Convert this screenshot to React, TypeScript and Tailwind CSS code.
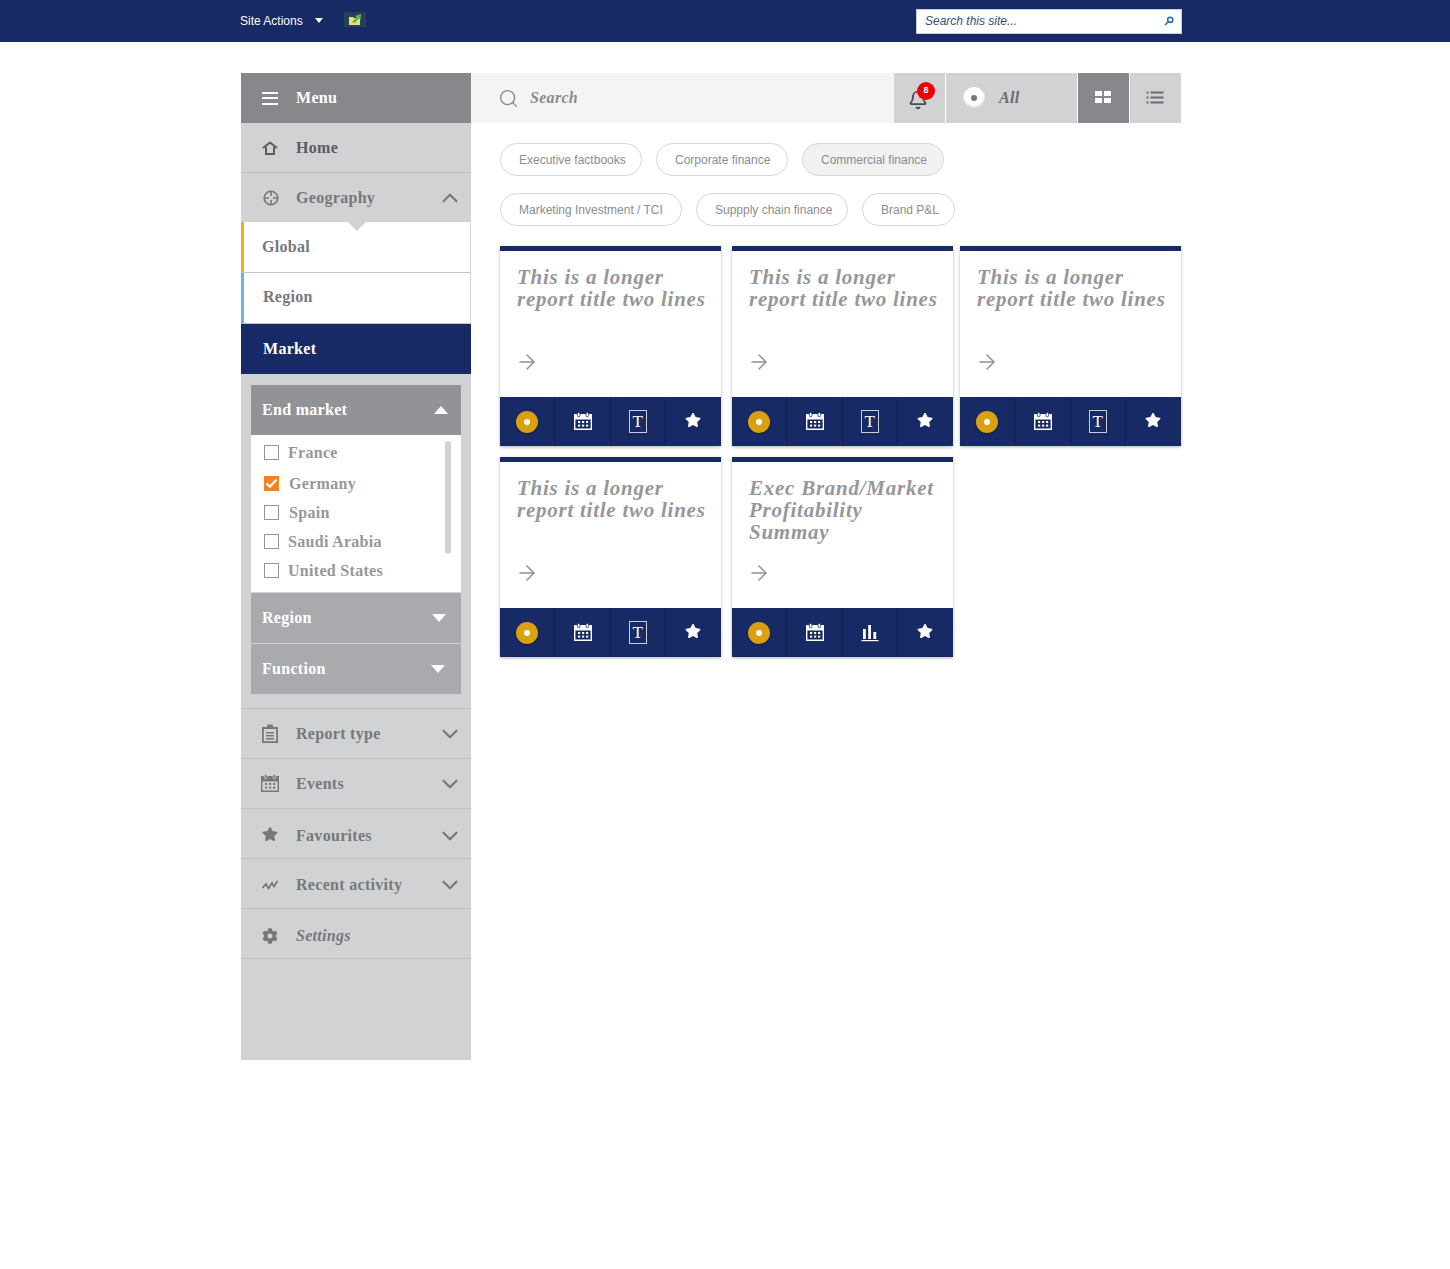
import { ArrowRight, Bell, ChevronDown, ChevronUp, Search } from "lucide-react";
import { FaCog, FaStar } from "react-icons/fa";
import type { ReactNode } from "react";

const serif = "font-['Liberation_Serif',serif] font-bold tracking-[0.3px]";

const NAVY = "bg-[#172a65]";

function Calendar({ className, cut }: { className?: string; cut: string }) {
  return (
    <svg viewBox="0 0 18 18" className={className} fill="currentColor">
      <path fillRule="evenodd" d="M0 2h18v16H0V2zm1.4 5.4v9.2h15.2V7.4H1.4z" />
      <rect x="3.4" y="0.4" width="2.6" height="4.4" rx="1.3" stroke={cut} strokeWidth="0.8" />
      <rect x="12" y="0.4" width="2.6" height="4.4" rx="1.3" stroke={cut} strokeWidth="0.8" />
      <rect x="4" y="9" width="2.2" height="2" />
      <rect x="8" y="9" width="2.2" height="2" />
      <rect x="12" y="9" width="2.2" height="2" />
      <rect x="4" y="12.6" width="2.2" height="2" />
      <rect x="8" y="12.6" width="2.2" height="2" />
      <rect x="12" y="12.6" width="2.2" height="2" />
    </svg>
  );
}

function TBox() {
  return (
    <div className="flex h-[23px] w-[18px] items-center justify-center border-[1.5px] border-[#c8cbd8] font-['Liberation_Serif',serif] text-[17px] leading-none text-white">
      T
    </div>
  );
}

function Bars() {
  return (
    <svg viewBox="0 0 18 18" className="h-[18px] w-[18px]" fill="white">
      <rect x="2" y="5" width="2.8" height="10" />
      <rect x="7.2" y="1" width="2.8" height="14" />
      <rect x="12.4" y="8" width="2.8" height="7" />
      <rect x="0.5" y="16" width="17" height="1.2" />
    </svg>
  );
}

function Card({ title, bars, className = "" }: { title: ReactNode; bars?: boolean; className?: string }) {
  const cell = "flex w-1/4 items-center justify-center border-r border-[#101f4e] last:border-r-0";
  return (
    <div className={`flex h-[200px] w-[221px] flex-col border-t-[5px] border-[#172a65] bg-white shadow-[0_1px_3px_rgba(0,0,0,0.3)] ${className}`}>
      <div className="h-[146px] pt-[15px] pl-[17px]">
        <div className="h-[84px] font-['Liberation_Serif',serif] text-[21px] leading-[22px] font-bold tracking-[0.75px] whitespace-nowrap text-[#96979a] italic">
          {title}
        </div>
        <ArrowRight className="ml-[-2px] h-[24px] w-[24px] text-[#909194]" strokeWidth={1.5} />
      </div>
      <div className={`flex h-[49px] ${NAVY}`}>
        <div className={cell}>
          <div className="flex h-[22px] w-[22px] items-center justify-center rounded-full bg-[#d9a00f] shadow-[0_1px_2px_rgba(0,0,0,0.4)]">
            <div className="h-[6px] w-[6px] rounded-full bg-white" />
          </div>
        </div>
        <div className={cell}>
          <Calendar className="mb-[2px] ml-[1px] h-[18px] w-[18px] text-white" cut="#172a65" />
        </div>
        <div className={cell}>{bars ? <Bars /> : <TBox />}</div>
        <div className={cell}>
          <FaStar className="mb-[4px] h-[16px] w-[16px] text-white" />
        </div>
      </div>
    </div>
  );
}

function Pill({ label, active, className }: { label: string; active?: boolean; className: string }) {
  return (
    <div className={`flex h-[33px] items-center rounded-full border border-[#d5d6d8] pl-[18px] font-['Liberation_Sans',sans-serif] text-[12px] text-[#8b8c8f] ${active ? "bg-[#f1f1f1]" : "bg-white"} ${className}`}>
      {label}
    </div>
  );
}

function NavRow({ icon, label, italic, chevron = true, className = "" }: { icon: ReactNode; label: string; italic?: boolean; chevron?: boolean; className?: string }) {
  return (
    <div className={`flex h-[50px] items-center border-b border-[#bfc0c3] text-[#77787b] ${className}`}>
      <div className="flex w-[55px] justify-center pl-[3px]">{icon}</div>
      <span className={`flex-1 text-[16px] ${serif} ${italic ? "italic" : ""}`}>{label}</span>
      {chevron && <ChevronDown className="mr-[8px] h-[26px] w-[26px] text-[#77787b]" strokeWidth={2} />}
    </div>
  );
}

function FilterHead({ label, up, color, className }: { label: string; up?: boolean; color: string; className: string }) {
  return (
    <div className={`flex h-[50px] items-center justify-between pl-[11px] text-white ${color} ${className}`}>
      <span className={`text-[16px] ${serif}`}>{label}</span>
      <span className={`h-0 w-0 border-x-[7px] border-x-transparent ${up ? "border-b-[8px] border-b-white" : "border-t-[8px] border-t-white"}`} />
    </div>
  );
}

function Country({ label, checked, className = "" }: { label: string; checked?: boolean; className?: string }) {
  return (
    <div className={`flex h-[29px] items-center pl-[13px] ${className}`}>
      {checked ? (
        <span className="flex h-[15px] w-[15px] items-center justify-center bg-[#f58220]">
          <svg viewBox="0 0 15 15" className="h-[15px] w-[15px]" fill="none" stroke="white" strokeWidth="2.2">
            <path d="M2.5 7.5l3.3 3.3 6.7-7" />
          </svg>
        </span>
      ) : (
        <span className="h-[15px] w-[15px] border border-[#949598] bg-white" />
      )}
      <span className={`ml-[9px] text-[16px] text-[#96979a] ${serif}`}>{label}</span>
    </div>
  );
}

const longTitle = (
  <>
    This is a longer
    <br />
    report title two lines
  </>
);

export default function App() {
  return (
    <div className="min-h-[1269px] bg-white">
      <div className={`h-[42px] ${NAVY}`}>
        <div className="ml-[240px] flex h-full w-[942px] items-center justify-between font-['Liberation_Sans',sans-serif]">
          <div className="flex items-center text-[12px] text-white">
            <span>Site Actions</span>
            <span className="mt-[-2px] ml-[12px] h-0 w-0 border-x-[4.5px] border-t-[5px] border-x-transparent border-t-white" />
            <span className="mt-[-3px] ml-[21px] flex h-[15px] w-[22px] items-center justify-center bg-[#24405a]">
              <svg viewBox="0 0 14 13" className="h-[13px] w-[14px]">
                <path d="M1 4h4l1 1h6v7H1z" fill="#eadb7c" />
                <path d="M4 9l4.5-4.5L7 3l6-2-.5 6L11 5.5 6.5 10z" fill="#57b947" />
              </svg>
            </span>
          </div>
          <div className="flex h-[25px] w-[266px] items-center justify-between border border-[#c9ccd6] bg-white pr-[7px] pl-[8px] text-[12px] text-[#3c4a7c] italic">
            <span>Search this site...</span>
            <svg viewBox="0 0 10 10" className="h-[10px] w-[10px]" fill="none" stroke="#1673b9" strokeWidth="1.6">
              <circle cx="6.2" cy="3.8" r="2.6" />
              <path d="M4.2 5.8L1 9" />
            </svg>
          </div>
        </div>
      </div>

      <div className="mt-[31px] ml-[241px] flex w-[940px]">
        <aside className="flex h-[987px] w-[230px] flex-col bg-[#d1d2d4]">
          <div className="flex h-[50px] items-center bg-[#87888c] text-white">
            <div className="flex w-[55px] justify-center pl-[3px]">
              <div className="flex w-[16px] flex-col gap-[3.5px]">
                <div className="h-[2px] bg-white" />
                <div className="h-[2px] bg-white" />
                <div className="h-[2px] bg-white" />
              </div>
            </div>
            <span className={`text-[16px] ${serif}`}>Menu</span>
          </div>
          <div className="flex h-[50px] items-center border-b border-[#bfc0c3] text-[#5c5d60]">
            <div className="flex w-[55px] justify-center pl-[3px]">
              <svg viewBox="0 0 16 14" className="h-[14px] w-[16px]" fill="none" stroke="currentColor" strokeWidth="2">
                <path d="M1 7l7-5.5L15 7M4 6v7h8V6" />
              </svg>
            </div>
            <span className={`text-[16px] ${serif}`}>Home</span>
          </div>
          <div className="relative z-10 flex h-[49px] items-center text-[#77787b]">
            <div className="flex w-[55px] justify-center pl-[4px]">
              <svg viewBox="0 0 16 16" className="h-[16px] w-[16px]" fill="none" stroke="currentColor" strokeWidth="1.6">
                <circle cx="8" cy="8" r="6.8" />
                <path d="M8 1v5M8 10v5M1 8h5M10 8h5" />
              </svg>
            </div>
            <span className={`flex-1 text-[16px] ${serif}`}>Geography</span>
            <ChevronUp className="mr-[8px] h-[26px] w-[26px]" strokeWidth={2} />
            <span className="absolute top-full left-[107px] h-0 w-0 border-x-[9px] border-t-[9px] border-x-transparent border-t-[#d1d2d4]" />
          </div>
          <div className="flex h-[51px] items-center border-r border-b border-l-[3px] border-r-[#d1d2d4] border-b-[#c4c5c8] border-l-[#f2b111] bg-white pb-[1px] pl-[18px]">
            <span className={`text-[16px] text-[#77787b] ${serif}`}>Global</span>
          </div>
          <div className="flex h-[51px] items-center border-r border-b border-l-[3px] border-r-[#d1d2d4] border-b-[#c4c5c8] border-l-[#6fb1e0] bg-white pb-[2px] pl-[19px]">
            <span className={`text-[16px] text-[#77787b] ${serif}`}>Region</span>
          </div>
          <div className={`flex h-[50px] items-center pl-[22px] text-white ${NAVY}`}>
            <span className={`text-[16px] ${serif}`}>Market</span>
          </div>

          <div className="border-b border-[#bfc0c3] px-[10px] pt-[11px] pb-[14px]">
            <FilterHead label="End market" up color="bg-[#929397]" className="pr-[13px]" />
            <div className="relative h-[158px] border-b border-[#d1d2d4] bg-white pt-[3px]">
              <Country label="France" className="mb-[2px]" />
              <Country label="Germany" checked className="[&>span:last-child]:ml-[10px]" />
              <Country label="Spain" className="[&>span:last-child]:ml-[10px]" />
              <Country label="Saudi Arabia" />
              <Country label="United States" />
              <div className="absolute top-[6px] right-[10px] h-[113px] w-[6px] rounded-full bg-[#d1d2d4]" />
            </div>
            <FilterHead label="Region" color="bg-[#a9aaad]" className="pr-[15px]" />
            <div className="mt-[1px]">
              <FilterHead label="Function" color="bg-[#a9aaad]" className="pr-[16px]" />
            </div>
          </div>

          <NavRow
            label="Report type"
            icon={
              <svg viewBox="0 0 16 19" className="h-[19px] w-[16px]" fill="currentColor">
                <path fillRule="evenodd" d="M0 3h5V1.5A1 1 0 0 1 6 .5h4a1 1 0 0 1 1 1V3h5v16H0V3zm1.8 2v12.2h12.4V5H1.8zM4 8h8v1.4H4V8zm0 3h8v1.4H4V11zm0 3h8v1.4H4V14z" />
              </svg>
            }
          />
          <NavRow label="Events" icon={<Calendar className="mb-[2px] h-[18px] w-[18px]" cut="#d1d2d4" />} />
          <NavRow label="Favourites" className="pt-[4px]" icon={<FaStar className="mb-[4px] h-[16px] w-[16px]" />} />
          <NavRow
            label="Recent activity"
            className="pt-[3px]"
            icon={
              <svg viewBox="0 0 16 10" className="h-[10px] w-[16px]" fill="none" stroke="currentColor" strokeWidth="1.7">
                <path d="M0.5 8L4 4l2.5 4.5L10 3l2 3.5L15.5 1" />
              </svg>
            }
          />
          <NavRow label="Settings" italic chevron={false} className="pt-[4px]" icon={<FaCog className="h-[16px] w-[16px]" />} />
        </aside>

        <main className="w-[710px]">
          <div className="flex h-[50px]">
            <div className="flex flex-1 items-center bg-[#f4f4f4] pl-[27px] text-[#8b8c8f]">
              <Search className="h-[21px] w-[21px]" strokeWidth={1.6} />
              <span className={`ml-[11px] text-[16px] italic ${serif}`}>Search</span>
            </div>
            <div className="relative flex w-[51px] items-center justify-center bg-[#d1d2d4]">
              <Bell className="mt-[3px] mr-[4px] h-[20px] w-[20px] text-[#4b4c4f]" strokeWidth={2.2} />
              <span className="absolute top-[9px] left-[23px] flex h-[18px] w-[18px] items-center justify-center rounded-full bg-[#ee0000] font-['Liberation_Sans',sans-serif] text-[9px] font-bold text-white">
                8
              </span>
            </div>
            <div className="ml-[1px] flex w-[131px] items-center bg-[#d1d2d4] pl-[17px]">
              <span className="flex h-[22px] w-[22px] items-center justify-center rounded-full bg-white shadow-[inset_0_-2px_3px_rgba(0,0,0,0.2)]">
                <span className="h-[6px] w-[6px] rounded-full bg-[#77787b]" />
              </span>
              <span className={`ml-[14px] text-[16px] text-[#6a6b6e] italic ${serif}`}>All</span>
            </div>
            <div className="ml-[1px] flex w-[51px] items-center justify-center bg-[#87888c]">
              <div className="mr-[1px] mb-[2px] grid grid-cols-2 gap-[2px]">
                <div className="h-[5px] w-[7px] bg-white" />
                <div className="h-[5px] w-[7px] bg-white" />
                <div className="h-[5px] w-[7px] bg-white" />
                <div className="h-[5px] w-[7px] bg-white" />
              </div>
            </div>
            <div className="ml-[1px] flex w-[51px] items-center justify-center bg-[#d1d2d4]">
              <svg viewBox="0 0 18 13" className="mr-[1px] mb-[2px] h-[13px] w-[18px]" fill="#6a6b6e">
                <rect x="0.5" y="0.5" width="2" height="2" />
                <rect x="4.5" y="0.5" width="13" height="2" />
                <rect x="0.5" y="5.5" width="2" height="2" />
                <rect x="4.5" y="5.5" width="13" height="2" />
                <rect x="0.5" y="10.5" width="2" height="2" />
                <rect x="4.5" y="10.5" width="13" height="2" />
              </svg>
            </div>
          </div>

          <div className="pt-[20px] pl-[29px]">
            <div className="flex gap-[14px]">
              <Pill label="Executive factbooks" className="w-[142px]" />
              <Pill label="Corporate finance" className="w-[132px]" />
              <Pill label="Commercial finance" active className="w-[142px]" />
            </div>
            <div className="mt-[17px] flex gap-[14px]">
              <Pill label="Marketing Investment / TCI" className="w-[182px]" />
              <Pill label="Suppply chain finance" className="w-[152px]" />
              <Pill label="Brand P&L" className="w-[93px]" />
            </div>
            <div className="mt-[20px] flex gap-[11px]">
              <Card title={longTitle} />
              <Card title={longTitle} />
              <Card title={longTitle} className="ml-[-4px]" />
            </div>
            <div className="mt-[11px] flex gap-[11px]">
              <Card title={longTitle} />
              <Card
                bars
                title={
                  <>
                    Exec Brand/Market
                    <br />
                    Profitability
                    <br />
                    Summay
                  </>
                }
              />
            </div>
          </div>
        </main>
      </div>
    </div>
  );
}
